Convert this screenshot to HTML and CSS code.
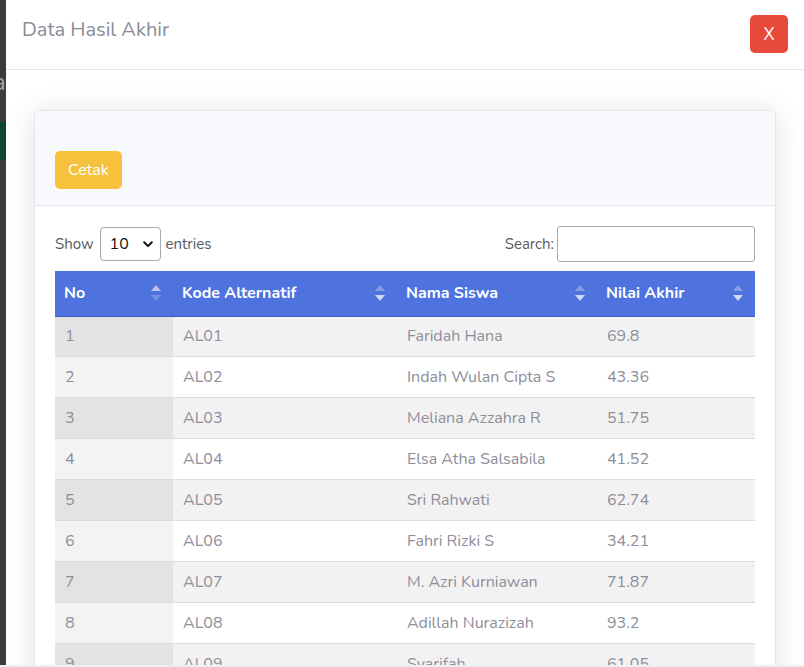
FILE: index.html
```html
<!DOCTYPE html>
<html>
<head>
<meta charset="utf-8">
<link rel="stylesheet" href="styles.css">
</head>
<body>
<div class="page-behind">
  <span class="behind-letter">a</span>
  <span class="behind-green"></span>
</div>
<div class="modal">
  <div class="modal-header">
    <h5 class="modal-title">Data Hasil Akhir</h5>
    <button class="btn-close">X</button>
  </div>
  <div class="modal-body">
    <div class="card">
      <div class="card-header">
        <button class="btn-warning">Cetak</button>
      </div>
      <div class="card-body">
        <div class="controls">
          <label class="length">Show
            <span class="select-box"><span>10</span>
              <svg width="10" height="7" viewBox="0 0 10 7"><path d="M1.2 1.3 L5 5.1 L8.8 1.3" fill="none" stroke="#111" stroke-width="2" stroke-linecap="round" stroke-linejoin="round"/></svg>
            </span>
            entries</label>
          <label class="search">Search:<span class="search-input"></span></label>
        </div>
        <table class="data">
          <thead>
            <tr>
              <th class="c1">No<span class="sort asc"></span></th>
              <th class="c2">Kode Alternatif<span class="sort"></span></th>
              <th class="c3">Nama Siswa<span class="sort"></span></th>
              <th class="c4">Nilai Akhir<span class="sort"></span></th>
            </tr>
          </thead>
          <tbody>
            <tr class="odd"><td class="sorted">1</td><td>AL01</td><td>Faridah Hana</td><td>69.8</td></tr>
            <tr class="even"><td class="sorted">2</td><td>AL02</td><td>Indah Wulan Cipta S</td><td>43.36</td></tr>
            <tr class="odd"><td class="sorted">3</td><td>AL03</td><td>Meliana Azzahra R</td><td>51.75</td></tr>
            <tr class="even"><td class="sorted">4</td><td>AL04</td><td>Elsa Atha Salsabila</td><td>41.52</td></tr>
            <tr class="odd"><td class="sorted">5</td><td>AL05</td><td>Sri Rahwati</td><td>62.74</td></tr>
            <tr class="even"><td class="sorted">6</td><td>AL06</td><td>Fahri Rizki S</td><td>34.21</td></tr>
            <tr class="odd"><td class="sorted">7</td><td>AL07</td><td>M. Azri Kurniawan</td><td>71.87</td></tr>
            <tr class="even"><td class="sorted">8</td><td>AL08</td><td>Adillah Nurazizah</td><td>93.2</td></tr>
            <tr class="odd"><td class="sorted">9</td><td>AL09</td><td>Syarifah</td><td>61.05</td></tr>
          </tbody>
        </table>
      </div>
    </div>
  </div>
</div>
<div class="bottom-strip"></div>
</body>
</html>
```

FILE: styles.css
```css
* { box-sizing: border-box; }
html, body {
  margin: 0;
  padding: 0;
  height: 667px;
  overflow: hidden;
}
body {
  background: #3a3b3b;
  font-family: "Nunito", "Noto Sans", "Open Sans", sans-serif;
  color: #858796;
  position: relative;
}
.page-behind {
  position: absolute;
  left: 0;
  top: 0;
  width: 6px;
  height: 667px;
}
.behind-letter {
  position: absolute;
  left: -7px;
  top: 66px;
  font-size: 24px;
  color: #a6a6a6;
}
.behind-green {
  position: absolute;
  left: 0;
  top: 122px;
  width: 6px;
  height: 38px;
  background: #0d4630;
}
.modal {
  margin-left: 6px;
  width: 800px;
  height: 667px;
  background: #fff;
}
.modal-header {
  display: flex;
  justify-content: space-between;
  align-items: flex-start;
  height: 70px;
  padding: 15px 18px 0 16px;
  border-bottom: 1px solid #e3e6f0;
}
.modal-title {
  margin: 0;
  padding-top: 3px;
  font-size: 20px;
  font-weight: 400;
  line-height: 24px;
  color: #8a8b99;
}
.btn-close {
  width: 38px;
  height: 38px;
  border: none;
  border-radius: 5px;
  background: #e74a3b;
  color: #fff;
  font-family: inherit;
  font-size: 17px;
  padding: 0;
}
.modal-body {
  padding: 40px 30px 0 28px;
}
.card {
  border: 1px solid #e3e6f0;
  border-radius: 5px;
  background: #fff;
  box-shadow: 0 2px 28px rgba(58, 59, 69, 0.15);
}
.card-header {
  background: #f8f9fc;
  border-bottom: 1px solid #e3e6f0;
  padding: 40px 20px 16px;
  border-radius: 5px 5px 0 0;
}
.btn-warning {
  height: 38px;
  padding: 0 13px;
  border: none;
  border-radius: 5px;
  background: #f6c23e;
  color: #fff;
  font-family: inherit;
  font-size: 16px;
}
.card-body {
  padding: 20px 20px;
}
.controls {
  display: flex;
  justify-content: space-between;
  align-items: center;
  height: 36px;
  margin-bottom: 9px;
  font-size: 15px;
  color: #555a5f;
}
.length, .search {
  display: flex;
  align-items: center;
}
.select-box {
  display: inline-flex;
  align-items: center;
  justify-content: space-between;
  width: 61px;
  height: 34px;
  margin: 0 5px 0 6px;
  padding: 0 7px 0 9px;
  border: 1px solid #aaa;
  border-radius: 4px;
  color: #111;
  font-size: 16px;
}
.search-input {
  display: inline-block;
  width: 198px;
  height: 36px;
  margin-left: 3px;
  border: 1px solid #aaa;
  border-radius: 3px;
}
table.data {
  width: 700px;
  border-collapse: collapse;
  font-size: 16px;
}
table.data th {
  position: relative;
  height: 45px;
  padding: 0 10px 0 9px;
  background: #4e73df;
  color: #fff;
  text-align: left;
  font-weight: 700;
  border-bottom: 1px solid #3b5cc4;
}
.c1 { width: 118px; }
.c2 { width: 224px; }
.c3 { width: 200px; }
.c4 { width: 158px; }
.sort {
  position: absolute;
  right: 12px;
  top: 14px;
  width: 10px;
  height: 16px;
}
.sort::before, .sort::after {
  content: "";
  position: absolute;
  left: 0;
  border-left: 5px solid transparent;
  border-right: 5px solid transparent;
}
.sort::before {
  top: 0;
  border-bottom: 6.5px solid rgba(200, 210, 240, 0.45);
}
.sort::after {
  bottom: 0;
  border-top: 6.5px solid rgba(235, 235, 245, 0.85);
}
.sort.asc::before { border-bottom-color: rgba(210, 200, 245, 0.9); }
.sort.asc::after { border-top-color: rgba(140, 160, 235, 0.6); }
table.data td {
  height: 41px;
  padding: 0 10px;
  border-top: 1px solid #dddddd;
  color: #8d8e9c;
}
table.data tbody tr:first-child td { border-top: none; height: 40px; }
tr.odd td { background: #f2f2f2; }
tr.odd td.sorted { background: #e3e3e3; }
tr.even td { background: #fff; }
tr.even td.sorted { background: #f3f3f3; }
.bottom-strip {
  position: absolute;
  left: 0;
  bottom: 0;
  width: 804px;
  height: 2px;
  background: #eeeeee;
}
```
